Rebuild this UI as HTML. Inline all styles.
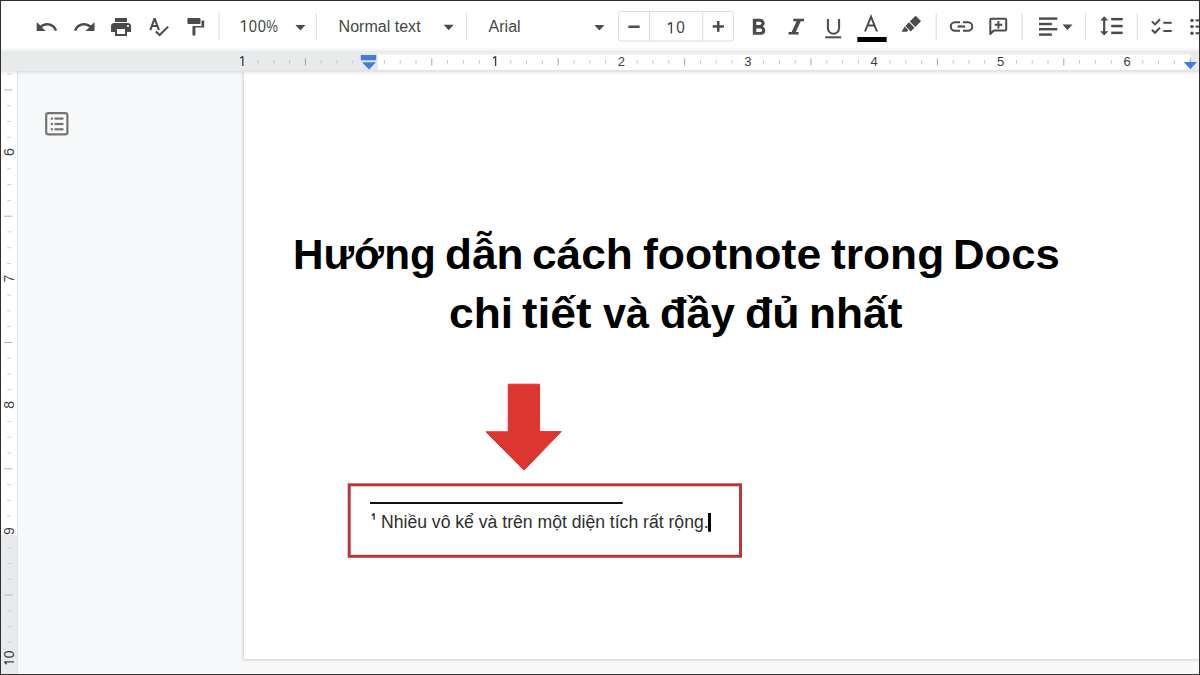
<!DOCTYPE html>
<html><head><meta charset="utf-8">
<style>
*{margin:0;padding:0;box-sizing:border-box}
html,body{width:1200px;height:675px;overflow:hidden;background:#fff;font-family:"Liberation Sans",sans-serif;position:relative}
.a{position:absolute}
svg{position:absolute;left:0;top:0}
.rn{font-family:"Liberation Sans",sans-serif;font-size:13px;fill:#3c4043}
.tb{font-family:"Liberation Sans",sans-serif;font-size:16px;fill:#444746}
.tw{position:absolute;font-weight:bold;font-size:43px;line-height:50px;color:#000;white-space:nowrap;transform-origin:0 0}
.fn{position:absolute;white-space:nowrap;color:#2e2e2e;font-size:17.6px;line-height:20px}
</style></head><body>
<div class="a" style="left:0;top:0;width:1200px;height:51px;background:#fff"></div>
<div class="a" style="left:0;top:47px;width:1200px;height:4px;background:linear-gradient(rgba(60,64,67,0),rgba(60,64,67,.07))"></div>
<div class="a" style="left:0;top:51px;width:1200px;height:20px;background:#e9eaec"></div>
<div class="a" style="left:378px;top:52.5px;width:812px;height:17.5px;background:linear-gradient(#f1f2f3 0,#f1f2f3 2px,#fff 2.5px,#fff 16.5px,#f0f0f0 17.5px)"></div>
<div class="a" style="left:0;top:71px;width:1200px;height:604px;background:#f8f9fa"></div>
<div class="a" style="left:0;top:71px;width:18px;height:464px;background:#fff"></div>
<div class="a" style="left:0;top:535px;width:18px;height:140px;background:#e8eaed"></div>
<div class="a" style="left:17px;top:71px;width:1px;height:604px;background:#e3e3e3"></div>
<div class="a" style="left:244px;top:71px;width:960px;height:588px;background:#fff;box-shadow:-1px 1px 3px rgba(60,64,67,.22)"></div>
<div class="a" style="left:0;top:71px;width:1200px;height:5px;background:linear-gradient(rgba(60,64,67,.15),rgba(60,64,67,.04) 50%,rgba(60,64,67,0))"></div>
<svg width="1200" height="675" viewBox="0 0 1200 675">
<g fill="#4b4b4b">
<path transform="translate(34.7 15)" d="M12.5 8c-2.65 0-5.05.99-6.9 2.6L2 7v9h9l-3.62-3.62c1.39-1.16 3.16-1.88 5.12-1.88 3.54 0 6.55 2.31 7.6 5.5l2.37-.78C21.08 11.03 17.15 8 12.5 8z"/>
<path transform="translate(72.5 15)" d="M18.4 10.6C16.55 8.99 14.15 8 11.5 8c-4.65 0-8.58 3.03-9.96 7.22L3.9 16c1.050-3.19 4.05-5.5 7.6-5.5 1.95 0 3.73.72 5.12 1.88L13 16h9V7l-3.6 3.6z"/>
<path transform="translate(109 15)" d="M19 8H5c-1.66 0-3 1.34-3 3v6h4v4h12v-4h4v-6c0-1.66-1.34-3-3-3zm-3 11H8v-5h8v5zm3-7c-.55 0-1-.45-1-1s.45-1 1-1 1 .45 1 1-.45 1-1 1zm-1-9H6v4h12V3z"/>
<rect x="187.4" y="18" width="13.1" height="6" rx="1"/>
<path d="M200.5 20.5 H204.2 V27.6 H195.4 V35.6 H192.5 V26 H201.5 V20.5 Z"/>
<path transform="translate(752.8 18.8) scale(1.16 1.14) translate(-7 -4)" d="M15.6 10.79c.97-.67 1.65-1.77 1.65-2.79 0-2.26-1.75-4-4-4H7v14h7.04c2.09 0 3.71-1.7 3.71-3.79 0-1.52-.86-2.82-2.15-3.42zM10 6.5h3c.83 0 1.5.67 1.5 1.5s-.67 1.5-1.5 1.5h-3v-3zm3.5 9H10v-3h3.5c.83 0 1.5.67 1.5 1.5s-.67 1.5-1.5 1.5z"/>
<path d="M793.3 18.8 H804 V21.2 H800.8 L795.8 32.1 H798.6 V34.5 H788.5 V32.1 H791.6 L796.6 21.2 H793.3 Z"/>
<path d="M915 16.2 Q915.6 15.6 916.2 16.2 L920.5 20.5 Q921.1 21.1 920.5 21.7 L915.3 26.9 L909.8 21.4 Z"/>
<path d="M909.0 22.2 L914.5 27.7 L910.8 31.4 L905.3 25.9 Z"/>
<path d="M904.6 26.6 L908.3 30.3 L906.9 31.7 L901.6 31.7 Z"/>
<rect x="1039" y="17.4" width="18.3" height="2.4"/><rect x="1039" y="22.8" width="12.9" height="2.4"/><rect x="1039" y="28" width="18.3" height="2.4"/><rect x="1039" y="33.4" width="12.9" height="2.4"/>
<path d="M1104.2 16.2 L1108.3 20.4 H1105.3 V31.3 H1108.3 L1104.2 35.5 L1100.1 31.3 H1103.1 V20.4 H1100.1 Z"/>
<rect x="1111.2" y="17.9" width="11.5" height="2.5"/><rect x="1111.2" y="24.8" width="11.5" height="2.5"/><rect x="1111.2" y="31.6" width="11.5" height="2.5"/>
<rect x="1163.3" y="21.8" width="8.4" height="2"/><rect x="1163.3" y="30" width="8.4" height="2"/>
<circle cx="1192" cy="20.4" r="1.7"/><circle cx="1192" cy="26.6" r="1.7"/><circle cx="1192" cy="33.2" r="1.7"/>
<rect x="1195.5" y="19.4" width="4" height="2"/><rect x="1195.5" y="25.6" width="4" height="2"/><rect x="1195.5" y="32.2" width="4" height="2"/>
<path d="M295.4 25 H305.4 L300.4 30.4 Z"/>
<path d="M443.7 24.8 H453.7 L448.7 30.2 Z"/>
<path d="M594.4 25 H604.4 L599.4 30.4 Z"/>
<path d="M1062.5 24.6 H1072.5 L1067.5 30.0 Z"/>
<rect x="628.4" y="25.5" width="11.2" height="2.5"/>
<rect x="712.7" y="25.2" width="11.2" height="2.5"/><rect x="717" y="21" width="2.5" height="10.8"/>
</g>
<g fill="none" stroke="#4b4b4b" stroke-width="2">
<path d="M150.3 30.2 L154.6 18.3 L159.0 30.2 M152.2 25.9 H157.2" stroke-linejoin="bevel"/>
<path d="M155.8 31.4 L159.6 35 L168.2 26.6"/>
<path d="M827.9 18.9 V28.2 A5.3 5.3 0 0 0 839.1 28.2 V18.9"/>
<path d="M865 31.5 L871 16.6 L877 31.5 M867 25.6 H875"/>
<path d="M960 22.3 H955 A4.25 4.25 0 0 0 955 30.8 H960 M963 22.3 H968 A4.25 4.25 0 0 1 968 30.8 H963"/>
<path d="M957.6 26.5 H965.2" stroke-width="2.2"/>
<path d="M990.3 34 V19.8 Q990.3 18.7 991.4 18.7 H1005.1 Q1006.2 18.7 1006.2 19.8 V29.4 Q1006.2 30.5 1005.1 30.5 H993.8 Z" stroke-linejoin="round"/>
<path d="M998.4 21 V28.6 M994.6 24.8 H1002.2"/>
<path d="M1151.9 21.4 L1155 24.4 L1160 19.2 M1151.9 29.8 L1155 32.8 L1160 27.6"/>
</g>
<rect x="825.2" y="36.3" width="16" height="2" fill="#4b4b4b"/>
<rect x="857.3" y="37" width="29.4" height="5" fill="#000"/>
<rect x="218.5" y="13" width="1" height="27" fill="#dadce0"/>
<rect x="315.8" y="13" width="1" height="27" fill="#dadce0"/>
<rect x="466.1" y="13" width="1" height="27" fill="#dadce0"/>
<rect x="935.7" y="13" width="1" height="27" fill="#dadce0"/>
<rect x="1021.7" y="13" width="1" height="27" fill="#dadce0"/>
<rect x="1084.9" y="13" width="1" height="27" fill="#dadce0"/>
<rect x="1136.8" y="13" width="1" height="27" fill="#dadce0"/>
<rect x="618.5" y="11.5" width="115" height="29.5" rx="3" fill="none" stroke="#dadce0"/>
<rect x="649" y="12" width="1" height="29" fill="#dadce0"/><rect x="702.2" y="12" width="1" height="29" fill="#dadce0"/>
<text x="248.86" y="31.8" class="tb" textLength="8.18" lengthAdjust="spacingAndGlyphs">0</text>
<text x="257.81" y="31.8" class="tb" textLength="8.18" lengthAdjust="spacingAndGlyphs">0</text>
<text x="266.3" y="31.8" class="tb" textLength="11.6" lengthAdjust="spacingAndGlyphs">%</text>
<path d="M244.5 20.2 V31.8 M240.8 22.5 L244.5 20.3" fill="none" stroke="#444746" stroke-width="1.45"/>
<text x="338.6" y="31.6" class="tb" textLength="82" lengthAdjust="spacingAndGlyphs">Normal text</text>
<text x="488.6" y="31.8" class="tb" textLength="32" lengthAdjust="spacingAndGlyphs">Arial</text>
<text x="667.8" y="33.4" class="tb" textLength="17" lengthAdjust="spacingAndGlyphs"><tspan fill="transparent">1</tspan>0</text>
<path d="M671.4 22.4 V33.4 M667.9 24.5 L671.4 22.5" fill="none" stroke="#444746" stroke-width="1.45"/>
<path d="M242.8 56.2 V66 M240.2 58.3 L242.8 56.4" fill="none" stroke="#3c4043" stroke-width="1.35"/>
<rect x="257.5" y="60" width="1" height="3.6" fill="#c2c5c8"/>
<rect x="273.3" y="60" width="1" height="3.6" fill="#c2c5c8"/>
<rect x="289.1" y="60" width="1" height="3.6" fill="#c2c5c8"/>
<rect x="304.9" y="58.5" width="1" height="7" fill="#a0a4a8"/>
<rect x="320.7" y="60" width="1" height="3.6" fill="#c2c5c8"/>
<rect x="336.5" y="60" width="1" height="3.6" fill="#c2c5c8"/>
<rect x="352.3" y="60" width="1" height="3.6" fill="#c2c5c8"/>
<rect x="383.9" y="60" width="1" height="3.6" fill="#c2c5c8"/>
<rect x="399.7" y="60" width="1" height="3.6" fill="#c2c5c8"/>
<rect x="415.5" y="60" width="1" height="3.6" fill="#c2c5c8"/>
<rect x="431.3" y="58.5" width="1" height="7" fill="#a0a4a8"/>
<rect x="447.1" y="60" width="1" height="3.6" fill="#c2c5c8"/>
<rect x="462.9" y="60" width="1" height="3.6" fill="#c2c5c8"/>
<rect x="478.7" y="60" width="1" height="3.6" fill="#c2c5c8"/>
<path d="M495.6 56.2 V66 M493.0 58.3 L495.6 56.4" fill="none" stroke="#3c4043" stroke-width="1.35"/>
<rect x="510.3" y="60" width="1" height="3.6" fill="#c2c5c8"/>
<rect x="526.1" y="60" width="1" height="3.6" fill="#c2c5c8"/>
<rect x="541.9" y="60" width="1" height="3.6" fill="#c2c5c8"/>
<rect x="557.7" y="58.5" width="1" height="7" fill="#a0a4a8"/>
<rect x="573.5" y="60" width="1" height="3.6" fill="#c2c5c8"/>
<rect x="589.3" y="60" width="1" height="3.6" fill="#c2c5c8"/>
<rect x="605.1" y="60" width="1" height="3.6" fill="#c2c5c8"/>
<text x="621.4" y="65.6" text-anchor="middle" class="rn">2</text>
<rect x="636.7" y="60" width="1" height="3.6" fill="#c2c5c8"/>
<rect x="652.5" y="60" width="1" height="3.6" fill="#c2c5c8"/>
<rect x="668.3" y="60" width="1" height="3.6" fill="#c2c5c8"/>
<rect x="684.1" y="58.5" width="1" height="7" fill="#a0a4a8"/>
<rect x="699.9" y="60" width="1" height="3.6" fill="#c2c5c8"/>
<rect x="715.7" y="60" width="1" height="3.6" fill="#c2c5c8"/>
<rect x="731.5" y="60" width="1" height="3.6" fill="#c2c5c8"/>
<text x="747.8" y="65.6" text-anchor="middle" class="rn">3</text>
<rect x="763.1" y="60" width="1" height="3.6" fill="#c2c5c8"/>
<rect x="778.9" y="60" width="1" height="3.6" fill="#c2c5c8"/>
<rect x="794.7" y="60" width="1" height="3.6" fill="#c2c5c8"/>
<rect x="810.5" y="58.5" width="1" height="7" fill="#a0a4a8"/>
<rect x="826.3" y="60" width="1" height="3.6" fill="#c2c5c8"/>
<rect x="842.1" y="60" width="1" height="3.6" fill="#c2c5c8"/>
<rect x="857.9" y="60" width="1" height="3.6" fill="#c2c5c8"/>
<text x="874.2" y="65.6" text-anchor="middle" class="rn">4</text>
<rect x="889.5" y="60" width="1" height="3.6" fill="#c2c5c8"/>
<rect x="905.3" y="60" width="1" height="3.6" fill="#c2c5c8"/>
<rect x="921.1" y="60" width="1" height="3.6" fill="#c2c5c8"/>
<rect x="936.9" y="58.5" width="1" height="7" fill="#a0a4a8"/>
<rect x="952.7" y="60" width="1" height="3.6" fill="#c2c5c8"/>
<rect x="968.5" y="60" width="1" height="3.6" fill="#c2c5c8"/>
<rect x="984.3" y="60" width="1" height="3.6" fill="#c2c5c8"/>
<text x="1000.6" y="65.6" text-anchor="middle" class="rn">5</text>
<rect x="1015.9" y="60" width="1" height="3.6" fill="#c2c5c8"/>
<rect x="1031.7" y="60" width="1" height="3.6" fill="#c2c5c8"/>
<rect x="1047.5" y="60" width="1" height="3.6" fill="#c2c5c8"/>
<rect x="1063.3" y="58.5" width="1" height="7" fill="#a0a4a8"/>
<rect x="1079.1" y="60" width="1" height="3.6" fill="#c2c5c8"/>
<rect x="1094.9" y="60" width="1" height="3.6" fill="#c2c5c8"/>
<rect x="1110.7" y="60" width="1" height="3.6" fill="#c2c5c8"/>
<text x="1127.0" y="65.6" text-anchor="middle" class="rn">6</text>
<rect x="1142.3" y="60" width="1" height="3.6" fill="#c2c5c8"/>
<rect x="1158.1" y="60" width="1" height="3.6" fill="#c2c5c8"/>
<rect x="1173.9" y="60" width="1" height="3.6" fill="#c2c5c8"/>
<rect x="1189.7" y="58.5" width="1" height="7" fill="#a0a4a8"/>
<g>
<rect x="360.8" y="55" width="15.4" height="5.3" fill="#3f7de0"/>
<path d="M362 62.3 H376 L369 69.4 Z" fill="#3f7de0"/>
<path d="M1183.7 62 H1197 L1190.4 69.2 Z" fill="#3f7de0"/>
</g>
<rect x="7.2" y="73.6" width="4" height="1" fill="#cfd1d4"/>
<rect x="4" y="89.4" width="8.5" height="1" fill="#b4b7bb"/>
<rect x="7.2" y="105.1" width="4" height="1" fill="#cfd1d4"/>
<rect x="7.2" y="120.9" width="4" height="1" fill="#cfd1d4"/>
<rect x="7.2" y="136.7" width="4" height="1" fill="#cfd1d4"/>
<text x="0" y="0" transform="translate(14.3 152.2) rotate(-90)" text-anchor="middle" class="rn" style="font-size:14px">6</text>
<rect x="7.2" y="168.3" width="4" height="1" fill="#cfd1d4"/>
<rect x="7.2" y="184.1" width="4" height="1" fill="#cfd1d4"/>
<rect x="7.2" y="199.9" width="4" height="1" fill="#cfd1d4"/>
<rect x="4" y="215.7" width="8.5" height="1" fill="#b4b7bb"/>
<rect x="7.2" y="231.4" width="4" height="1" fill="#cfd1d4"/>
<rect x="7.2" y="247.2" width="4" height="1" fill="#cfd1d4"/>
<rect x="7.2" y="263.0" width="4" height="1" fill="#cfd1d4"/>
<text x="0" y="0" transform="translate(14.3 278.5) rotate(-90)" text-anchor="middle" class="rn" style="font-size:14px">7</text>
<rect x="7.2" y="294.6" width="4" height="1" fill="#cfd1d4"/>
<rect x="7.2" y="310.4" width="4" height="1" fill="#cfd1d4"/>
<rect x="7.2" y="326.2" width="4" height="1" fill="#cfd1d4"/>
<rect x="4" y="342.0" width="8.5" height="1" fill="#b4b7bb"/>
<rect x="7.2" y="357.7" width="4" height="1" fill="#cfd1d4"/>
<rect x="7.2" y="373.5" width="4" height="1" fill="#cfd1d4"/>
<rect x="7.2" y="389.3" width="4" height="1" fill="#cfd1d4"/>
<text x="0" y="0" transform="translate(14.3 404.8) rotate(-90)" text-anchor="middle" class="rn" style="font-size:14px">8</text>
<rect x="7.2" y="420.9" width="4" height="1" fill="#cfd1d4"/>
<rect x="7.2" y="436.7" width="4" height="1" fill="#cfd1d4"/>
<rect x="7.2" y="452.5" width="4" height="1" fill="#cfd1d4"/>
<rect x="4" y="468.3" width="8.5" height="1" fill="#b4b7bb"/>
<rect x="7.2" y="484.0" width="4" height="1" fill="#cfd1d4"/>
<rect x="7.2" y="499.8" width="4" height="1" fill="#cfd1d4"/>
<rect x="7.2" y="515.6" width="4" height="1" fill="#cfd1d4"/>
<text x="0" y="0" transform="translate(14.3 531.1) rotate(-90)" text-anchor="middle" class="rn" style="font-size:14px">9</text>
<rect x="7.2" y="547.2" width="4" height="1" fill="#cfd1d4"/>
<rect x="7.2" y="563.0" width="4" height="1" fill="#cfd1d4"/>
<rect x="7.2" y="578.8" width="4" height="1" fill="#cfd1d4"/>
<rect x="4" y="594.5" width="8.5" height="1" fill="#b4b7bb"/>
<rect x="7.2" y="610.3" width="4" height="1" fill="#cfd1d4"/>
<rect x="7.2" y="626.1" width="4" height="1" fill="#cfd1d4"/>
<rect x="7.2" y="641.9" width="4" height="1" fill="#cfd1d4"/>
<text x="0" y="0" transform="translate(14.3 658.2) rotate(-90)" text-anchor="middle" class="rn" style="font-size:14px"><tspan fill="transparent">1</tspan>0</text>
<path d="M4.3 661.8 H14 M4.5 661.8 L6.6 664.2" fill="none" stroke="#3c4043" stroke-width="1.35"/>
<g fill="none" stroke="#757575" stroke-width="2.2">
<rect x="46.2" y="113.2" width="21.2" height="21.2" rx="2.2"/>
</g>
<g fill="#757575">
<rect x="50.8" y="117.5" width="2.1" height="2.2"/><rect x="54.5" y="117.5" width="9" height="2.2"/>
<rect x="50.8" y="122.9" width="2.1" height="2.2"/><rect x="54.5" y="122.9" width="9" height="2.2"/>
<rect x="50.8" y="128.2" width="2.1" height="2.2"/><rect x="54.5" y="128.2" width="9" height="2.2"/>
</g>
<path d="M508.2 384.2 H539.6 V431.6 H561.3 L524 470.2 L485.9 431.8 H508.2 Z" fill="#dd3530" stroke="#dd3530" stroke-width="1" stroke-linejoin="round"/>
<rect x="349.2" y="484.8" width="391.3" height="71.5" fill="none" stroke="#bb3637" stroke-width="3"/>
<rect x="370" y="502" width="252.7" height="2" fill="#111"/>
<rect x="708" y="513" width="3" height="18.7" fill="#000"/>
</svg>
<div class="tw" style="left:292.73px;top:229px;transform:scaleX(0.9826)">Hướng</div>
<div class="tw" style="left:444.68px;top:229px;transform:scaleX(1.0259)">dẫn</div>
<div class="tw" style="left:532.42px;top:229px;transform:scaleX(1.0297)">cách</div>
<div class="tw" style="left:643.02px;top:229px;transform:scaleX(1.0363)">footnote</div>
<div class="tw" style="left:830.89px;top:229px;transform:scaleX(1.0307)">trong</div>
<div class="tw" style="left:952.62px;top:229px;transform:scaleX(1.0157)">Docs</div>
<div class="tw" style="left:448.97px;top:288px;transform:scaleX(1.0311)">chi</div>
<div class="tw" style="left:521.74px;top:288px;transform:scaleX(1.0774)">tiết</div>
<div class="tw" style="left:602.61px;top:288px;transform:scaleX(0.9630)">và</div>
<div class="tw" style="left:660.01px;top:288px;transform:scaleX(1.0097)">đầy</div>
<div class="tw" style="left:745.45px;top:288px;transform:scaleX(1.0368)">đủ</div>
<div class="tw" style="left:808.50px;top:288px;transform:scaleX(1.0289)">nhất</div>
<svg width="1200" height="675" viewBox="0 0 1200 675"><path d="M374.1 513.4 V519.7 M371.7 515.3 Q373.3 514.6 374.1 513.4" fill="none" stroke="#222" stroke-width="1.3"/></svg>
<div class="fn" style="left:381px;top:512px">Nhiều vô kể và trên một diện tích rất rộng.</div>
<div class="a" style="left:0;top:0;width:1200px;height:675px;border:1px solid #303030"></div>
</body></html>
